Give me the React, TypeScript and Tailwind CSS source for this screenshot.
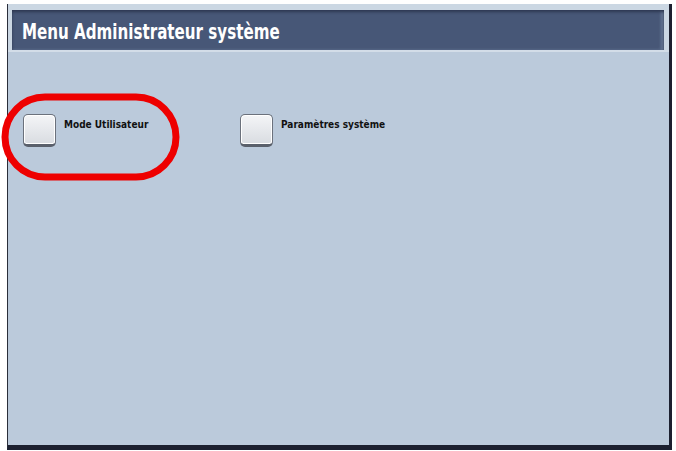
import React from "react";

function Btn({ label }: { label: string }) {
  return (
    <div className="flex items-start gap-[8px]">
      <div className="w-[33px] h-[33px] rounded-[5px] border border-[#6b717c] border-b-[3px] border-b-[#5a606b] bg-gradient-to-b from-[#f4f5f7] to-[#d9dce1] shadow-[inset_0_0_0_1px_#ffffff]" />
      <div
        className="pt-[5px] text-[10px] font-bold text-[#111] leading-[12px]"
        style={{ fontFamily: '"DejaVu Sans Condensed", "DejaVu Sans", sans-serif' }}
      >
        {label}
      </div>
    </div>
  );
}

export default function App() {
  return (
    <div className="relative w-[676px] h-[451px] bg-white overflow-hidden">
      <div className="ml-[7px] mt-[4px] w-[665px] h-[446px] border-l border-l-[#2a2e3a] border-r-[3px] border-r-[#1c2030] border-b-[5px] border-b-[#1c2030] bg-[#bbcadb] flex flex-col">
        <div className="pt-[6px] pl-[4px] pr-[5px] bg-[#cbd7e3]">
          <div className="h-[40px] bg-[#475777] shadow-[inset_0_2px_3px_#2c3650,inset_-3px_0_3px_#6a7b98] flex items-center pl-[10px] pt-[4px]">
            <span
              className="inline-block origin-left scale-x-[0.8] text-white font-bold text-[21px] leading-none whitespace-nowrap"
              style={{ fontFamily: '"DejaVu Sans Condensed", "DejaVu Sans", sans-serif' }}
            >
              Menu Administrateur système
            </span>
          </div>
        </div>
        <div className="h-[2px] bg-[#d3dde8]" />
        <div className="flex-1 flex items-start pt-[62px] pl-[15px]">
          <div className="w-[217px]">
            <Btn label="Mode Utilisateur" />
          </div>
          <Btn label="Paramètres système" />
        </div>
      </div>
      <svg className="absolute left-0 top-0" width="676" height="451">
        <rect x="5" y="97" width="171" height="80" rx="40" ry="40" fill="none" stroke="#ee0000" strokeWidth="7" />
      </svg>
    </div>
  );
}
